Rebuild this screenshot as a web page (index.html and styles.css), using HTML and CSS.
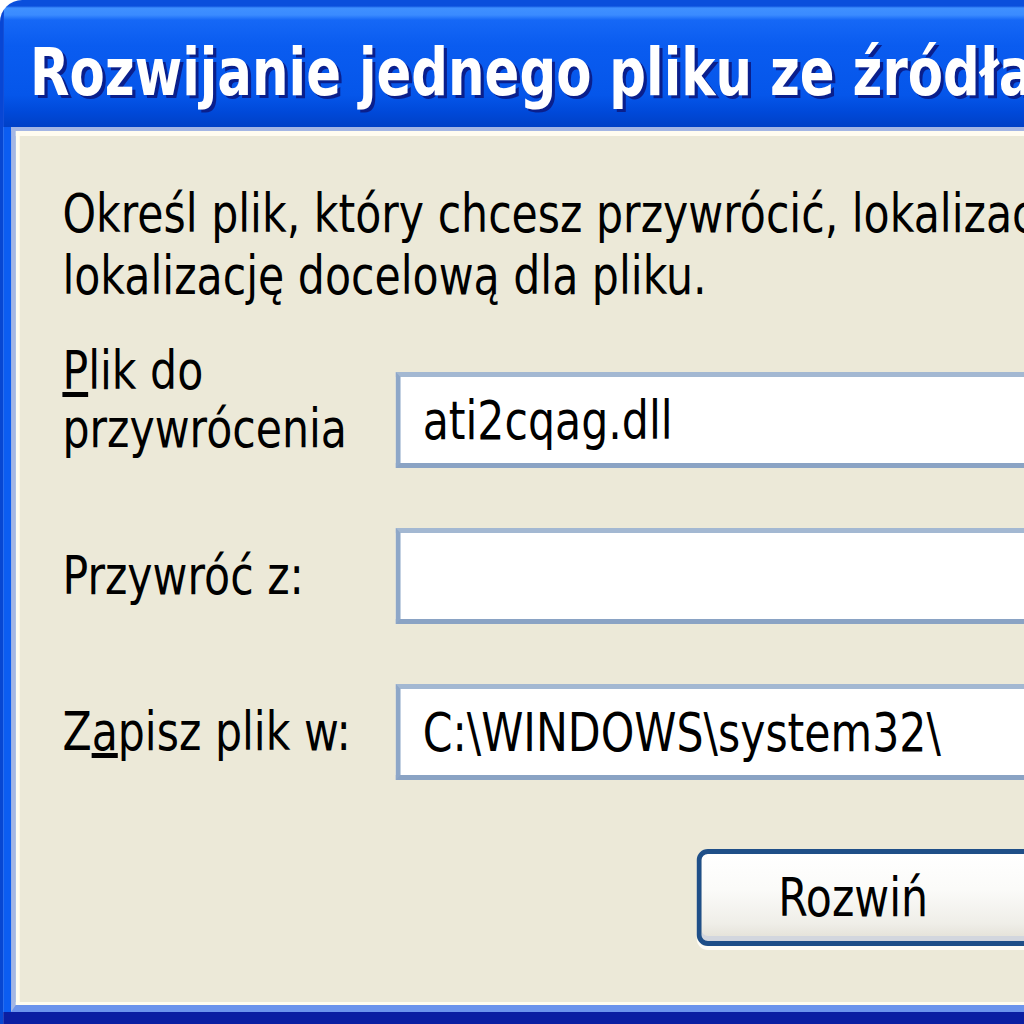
FILE: index.html
```html
<!DOCTYPE html>
<html lang="pl">
<head>
<title>Rozwijanie jednego pliku ze źródła</title>
<meta charset="utf-8">
<link rel="stylesheet" href="styles.css">
</head>
<body>

<div class="window">
  <div class="titlebar">
    <span class="title">Rozwijanie jednego pliku ze źródła</span>
  </div>

  <div class="frame">
    <div class="client">
      <div class="content">
        <p class="intro">Określ plik, który chcesz przywrócić, lokalizację źródłową oraz<br>lokalizację docelową dla pliku.</p>

        <div class="form">
          <div class="row">
            <label class="label label_tall"><u>P</u>lik do<br>przywrócenia</label>
            <div class="field">ati2cqag.dll</div>
          </div>
          <div class="row">
            <label class="label">Przywróć z:</label>
            <div class="field"></div>
          </div>
          <div class="row">
            <label class="label">Z<u>a</u>pisz plik w:</label>
            <div class="field">C:\WINDOWS\system32\</div>
          </div>
        </div>

        <div class="actions">
          <button class="button" type="button">Rozwiń</button>
        </div>
      </div>
    </div>
  </div>
</div>

</body>
</html>
```

FILE: styles.css
```css
html, body {
  margin: 0;
  overflow: hidden;
  background: #fff;
}
body {
  width: 1024px;
  height: 1024px;
  font-family: "DejaVu Sans", sans-serif;
  font-size: 54px;
  color: #000;
}
/* the whole dialog is drawn a bit narrow, like the shot */
.window {
  width: 1400px;
  height: 1024px;
  display: flex;
  flex-direction: column;
  overflow: hidden;
  border-top-left-radius: 28px 22px;
  transform: scaleX(.79);
  transform-origin: 0 0;
}
.titlebar {
  flex: none;
  height: 127px;
  box-sizing: border-box;
  padding: 40px 0 0 33px;
  border-left: 5px solid #0846d4;
  background: linear-gradient(to bottom,
    #0a4fdc 0, #0a4fdc 6px,
    #3f90ff 8px, #3a8bff 15px,
    #1668f6 20px, #0a5cf0 45px,
    #0556ea 95px, #0049d9 112px,
    #0040c6 127px);
}
.title {
  display: block;
  font-weight: bold;
  font-size: 65px;
  line-height: 65px;
  color: #fff;
  white-space: nowrap;
  text-shadow: 4px 3px 0 #0a1f8c;
}
.frame {
  flex: 1;
  display: flex;
  padding: 0 0 12px 10px;
  border-left: 4px solid #0747d2;
  background: linear-gradient(to bottom, #0b5df2 calc(100% - 12px), #0a1ea2 calc(100% - 12px));
}
.client {
  flex: 1;
  display: flex;
  border-style: solid;
  border-color: #a4b6e4;
  border-bottom-color: #6c94ec;
  border-width: 4px 0 7px 6px;
}
.content {
  flex: 1;
  background: #ece9d8;
  border-style: solid;
  border-color: #fffcf0;
  border-width: 5px 0 3px 5px;
  padding: 47px 0 0 54px;
}
.intro {
  margin: 0;
  line-height: 62px;
  white-space: nowrap;
}
.form {
  margin-top: 65px;
}
.row {
  display: flex;
  align-items: center;
  height: 96px;
}
.row + .row {
  margin-top: 60px;
}
.label {
  flex: none;
  width: 422px;
  line-height: 58px;
  white-space: nowrap;
}
.label_tall {
  align-self: flex-start;
  margin-top: -30px;
}
.field {
  flex: none;
  width: 900px;
  height: 96px;
  box-sizing: border-box;
  display: flex;
  align-items: center;
  padding-left: 28px;
  background: #fff;
  border-style: solid;
  border-color: #a3b8d2 #8ea7c8 #8aa3c4 #8ea7c8;
  border-width: 5px 6px;
  white-space: nowrap;
}
.actions {
  margin-top: 69px;
  padding-left: 803px;
}
.button {
  display: flex;
  align-items: center;
  width: 520px;
  height: 97px;
  box-sizing: border-box;
  padding: 0 0 0 97px;
  font: inherit;
  color: #000;
  border-style: solid;
  border-color: #1f4f88;
  border-width: 5px 6px;
  border-radius: 14px / 11px;
  background: linear-gradient(to bottom, #fff 0, #fbfbf9 40%, #efeee8 80%, #e2dfd5 100%);
  box-shadow: inset 0 -5px 0 #d2d6de, 0 4px 0 #fffdf6;
}
```
